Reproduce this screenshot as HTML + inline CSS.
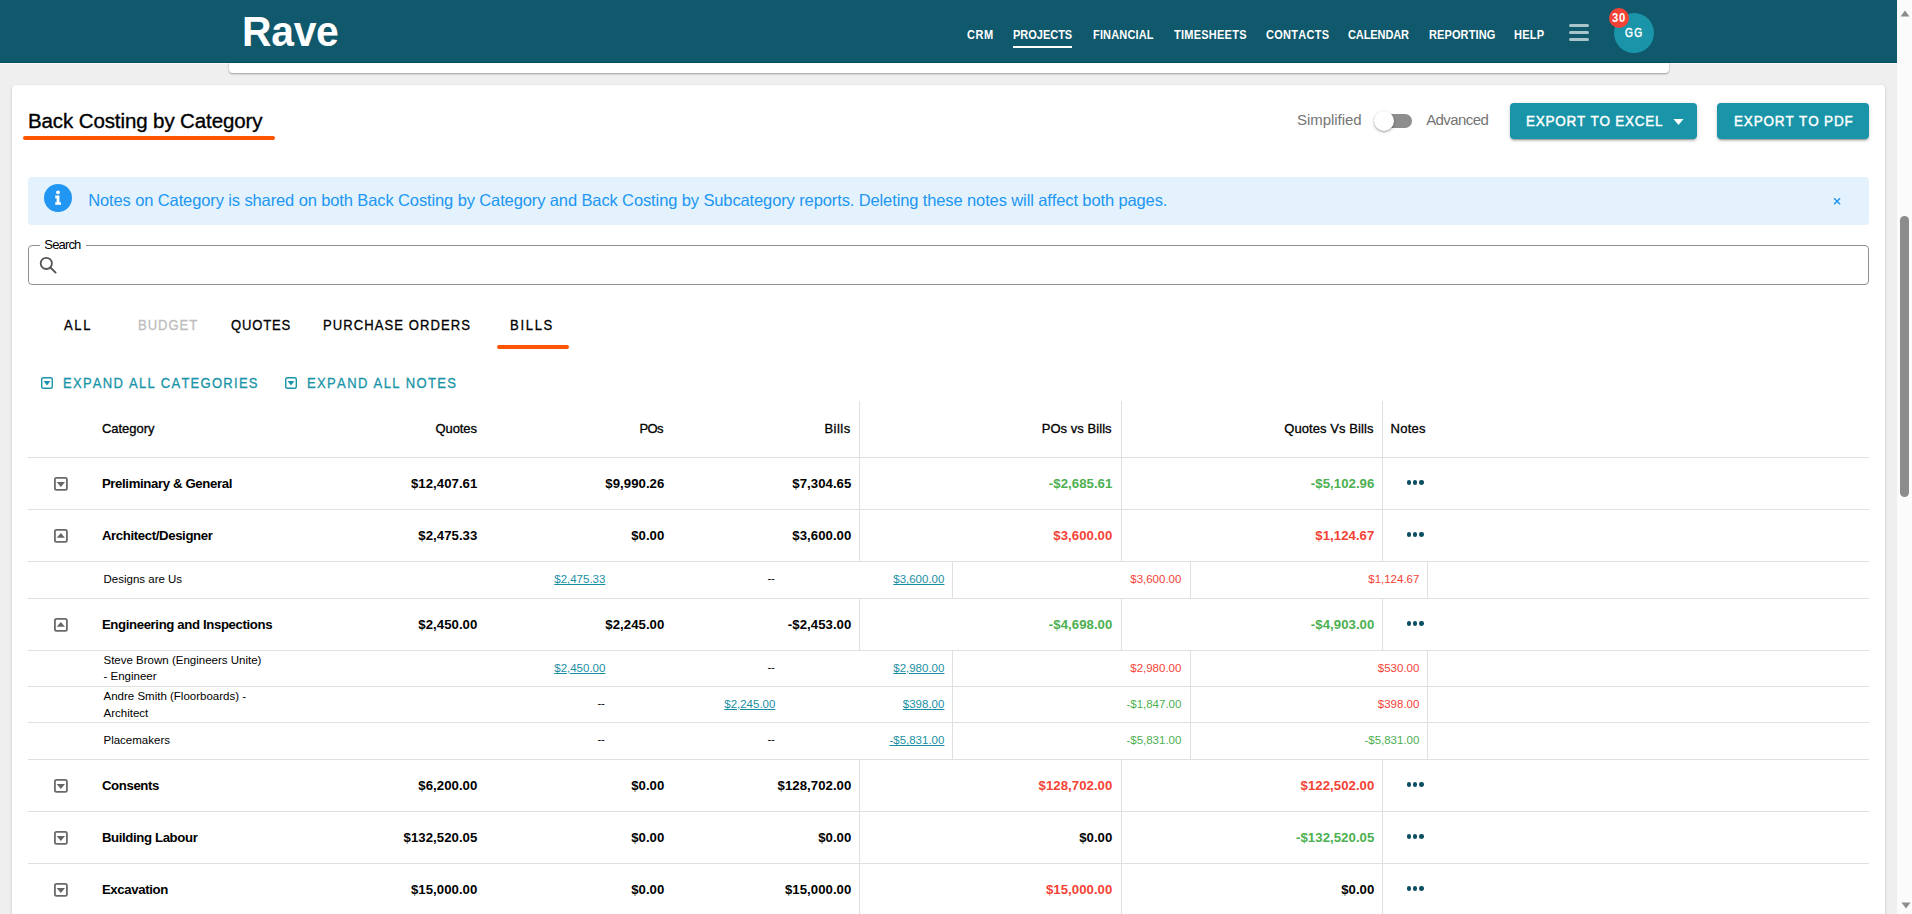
<!DOCTYPE html>
<html><head><meta charset="utf-8"><title>Back Costing by Category</title>
<style>
html,body{margin:0;padding:0;width:1912px;height:914px;overflow:hidden;background:#efefef;}
body{position:relative;font-family:"Liberation Sans",sans-serif;font-kerning:none;}
body>div{position:absolute;box-sizing:border-box;}
.t{white-space:nowrap;}
</style></head><body>
<div style="left:0px;top:63px;width:1897px;height:1px;background:#faf8f8;"></div>
<div style="left:229px;top:56px;width:1440px;height:17px;background:#fff;border-radius:0 0 4px 4px;box-shadow:0 1px 2px rgba(0,0,0,0.35);"></div>
<div style="left:0px;top:0px;width:1897px;height:63px;background:#10596c;"></div>
<div style="left:0px;top:62px;width:1897px;height:1px;background:#054d61;"></div>
<div class="t" style="left:242.10px;top:9.90px;font-size:43.0px;line-height:43.0px;font-weight:700;color:#fff;letter-spacing:-0.312px;transform:scaleX(0.95);transform-origin:0 0;">Rave</div>
<div class="t" style="left:967.00px;top:28.72px;font-size:12.5px;line-height:12.5px;font-weight:700;color:#fff;letter-spacing:0.575px;transform:scaleX(0.88);transform-origin:0 0;">CRM</div>
<div class="t" style="left:1013.20px;top:28.72px;font-size:12.5px;line-height:12.5px;font-weight:700;color:#fff;letter-spacing:-0.015px;transform:scaleX(0.88);transform-origin:0 0;">PROJECTS</div>
<div class="t" style="left:1092.50px;top:28.72px;font-size:12.5px;line-height:12.5px;font-weight:700;color:#fff;letter-spacing:0.186px;transform:scaleX(0.88);transform-origin:0 0;">FINANCIAL</div>
<div class="t" style="left:1173.80px;top:28.72px;font-size:12.5px;line-height:12.5px;font-weight:700;color:#fff;letter-spacing:0.279px;transform:scaleX(0.88);transform-origin:0 0;">TIMESHEETS</div>
<div class="t" style="left:1266.00px;top:28.72px;font-size:12.5px;line-height:12.5px;font-weight:700;color:#fff;letter-spacing:0.309px;transform:scaleX(0.88);transform-origin:0 0;">CONTACTS</div>
<div class="t" style="left:1347.70px;top:28.72px;font-size:12.5px;line-height:12.5px;font-weight:700;color:#fff;letter-spacing:-0.113px;transform:scaleX(0.88);transform-origin:0 0;">CALENDAR</div>
<div class="t" style="left:1428.70px;top:28.72px;font-size:12.5px;line-height:12.5px;font-weight:700;color:#fff;letter-spacing:0.120px;transform:scaleX(0.88);transform-origin:0 0;">REPORTING</div>
<div class="t" style="left:1513.90px;top:28.72px;font-size:12.5px;line-height:12.5px;font-weight:700;color:#fff;letter-spacing:0.326px;transform:scaleX(0.88);transform-origin:0 0;">HELP</div>
<div style="left:1013px;top:46px;width:59px;height:2px;background:#fff;"></div>
<div style="left:1568.5px;top:24px;width:20.200000000000045px;height:3px;background:#a9c4cb;border-radius:2px;"></div>
<div style="left:1568.5px;top:31px;width:20.200000000000045px;height:3px;background:#a9c4cb;border-radius:2px;"></div>
<div style="left:1568.5px;top:38px;width:20.200000000000045px;height:3px;background:#a9c4cb;border-radius:2px;"></div>
<div style="left:1614px;top:13px;width:40px;height:40px;background:#1994a8;border-radius:50%;"></div>
<div class="t" style="left:1625.20px;top:26.54px;font-size:12.0px;line-height:12.0px;font-weight:400;color:#fff;letter-spacing:1.548px;-webkit-text-stroke:0.5px #fff;transform:scaleX(0.85);transform-origin:0 0;">GG</div>
<div style="left:1609px;top:8px;width:20px;height:20px;background:#f44336;border-radius:50%;"></div>
<div class="t" style="left:1611.70px;top:11.72px;font-size:12.5px;line-height:12.5px;font-weight:700;color:#fff;letter-spacing:0.826px;transform:scaleX(0.9);transform-origin:0 0;">30</div>
<div style="left:12px;top:85px;width:1873px;height:845px;background:#fff;border-radius:4px;box-shadow:0 1px 3px rgba(0,0,0,0.2);"></div>
<div class="t" style="left:28.00px;top:110.85px;font-size:20.5px;line-height:20.5px;font-weight:400;color:#000;letter-spacing:-0.107px;-webkit-text-stroke:0.35px #000;">Back Costing by Category</div>
<div style="left:23px;top:136px;width:252px;height:4px;background:#ff5500;border-radius:2px;"></div>
<div class="t" style="left:1297.00px;top:112.20px;font-size:15.0px;line-height:15.0px;font-weight:400;color:#757575;letter-spacing:-0.042px;">Simplified</div>
<div class="t" style="left:1426.20px;top:112.20px;font-size:15.0px;line-height:15.0px;font-weight:400;color:#757575;letter-spacing:-0.596px;">Advanced</div>
<div style="left:1378px;top:114px;width:34px;height:14px;background:#8e8e8e;border-radius:7px;"></div>
<div style="left:1374px;top:111px;width:20px;height:20px;background:#fff;border-radius:50%;box-shadow:0 1px 3px rgba(0,0,0,0.3),0 1px 1px rgba(0,0,0,0.14);"></div>
<div style="left:1510px;top:103px;width:187px;height:36px;background:#1994a8;border-radius:4px;box-shadow:0 3px 1px -2px rgba(0,0,0,0.2),0 2px 2px 0 rgba(0,0,0,0.14),0 1px 5px 0 rgba(0,0,0,0.12);"></div>
<div class="t" style="left:1526.30px;top:113.10px;font-size:15.0px;line-height:15.0px;font-weight:400;color:#fff;letter-spacing:0.831px;-webkit-text-stroke:0.45px #fff;transform:scaleX(0.9);transform-origin:0 0;">EXPORT TO EXCEL</div>
<svg style="position:absolute;left:1673px;top:119px" width="11" height="6"><path d="M0.5 0 L10.5 0 L5.5 6 Z" fill="#fff"/></svg>
<div style="left:1717px;top:103px;width:152px;height:36px;background:#1994a8;border-radius:4px;box-shadow:0 3px 1px -2px rgba(0,0,0,0.2),0 2px 2px 0 rgba(0,0,0,0.14),0 1px 5px 0 rgba(0,0,0,0.12);"></div>
<div class="t" style="left:1734.20px;top:113.10px;font-size:15.0px;line-height:15.0px;font-weight:400;color:#fff;letter-spacing:0.924px;-webkit-text-stroke:0.45px #fff;transform:scaleX(0.9);transform-origin:0 0;">EXPORT TO PDF</div>
<div style="left:28px;top:177px;width:1841px;height:48px;background:#e3f2fd;border-radius:4px;"></div>
<svg style="position:absolute;left:44px;top:184px" width="28" height="28" viewBox="0 0 28 28"><circle cx="14" cy="14" r="14" fill="#2196f3"/><circle cx="14" cy="8.3" r="1.9" fill="#fff"/><path d="M11.2 11.6h4.2v6.6h1.6v2.6h-5.8v-2.6h1.4v-4h-1.4z" fill="#fff"/></svg>
<div class="t" style="left:88.20px;top:191.83px;font-size:16.5px;line-height:16.5px;font-weight:400;color:#2196f3;letter-spacing:-0.116px;">Notes on Category is shared on both Back Costing by Category and Back Costing by Subcategory reports. Deleting these notes will affect both pages.</div>
<svg style="position:absolute;left:1833px;top:197px" width="9" height="9"><path d="M1.1 1.2L7.1 7.2M7.1 1.2L1.1 7.2" stroke="#2196f3" stroke-width="1.5"/></svg>
<div style="left:28px;top:245px;width:1841px;height:40px;border:1px solid #8f8f8f;border-radius:4px;"></div>
<div style="left:40px;top:240px;width:46px;height:10px;background:#fff;"></div>
<div class="t" style="left:44.30px;top:238.00px;font-size:13.0px;line-height:13.0px;font-weight:400;color:#000;letter-spacing:-0.832px;">Search</div>
<svg style="position:absolute;left:38px;top:255px" width="20" height="20"><circle cx="8.3" cy="8.4" r="5.6" stroke="#555" stroke-width="1.8" fill="none"/><path d="M12.4 12.5L17.6 17.6" stroke="#555" stroke-width="1.9" stroke-linecap="round"/></svg>
<div class="t" style="left:63.50px;top:317.53px;font-size:14.5px;line-height:14.5px;font-weight:400;color:#000;letter-spacing:1.799px;-webkit-text-stroke:0.3px #000;transform:scaleX(0.9);transform-origin:0 0;">ALL</div>
<div class="t" style="left:137.60px;top:317.53px;font-size:14.5px;line-height:14.5px;font-weight:400;color:#bdbdbd;letter-spacing:1.065px;-webkit-text-stroke:0.3px #bdbdbd;transform:scaleX(0.9);transform-origin:0 0;">BUDGET</div>
<div class="t" style="left:231.10px;top:317.53px;font-size:14.5px;line-height:14.5px;font-weight:400;color:#000;letter-spacing:0.933px;-webkit-text-stroke:0.3px #000;transform:scaleX(0.9);transform-origin:0 0;">QUOTES</div>
<div class="t" style="left:322.90px;top:317.53px;font-size:14.5px;line-height:14.5px;font-weight:400;color:#000;letter-spacing:1.193px;-webkit-text-stroke:0.3px #000;transform:scaleX(0.9);transform-origin:0 0;">PURCHASE ORDERS</div>
<div class="t" style="left:509.60px;top:317.53px;font-size:14.5px;line-height:14.5px;font-weight:400;color:#000;letter-spacing:1.876px;-webkit-text-stroke:0.3px #000;transform:scaleX(0.9);transform-origin:0 0;">BILLS</div>
<div style="left:497px;top:345px;width:72px;height:4px;background:#ff5500;border-radius:2px;"></div>
<svg style="position:absolute;left:41px;top:377px" width="12" height="12" viewBox="0 0 12 12"><rect x="0.7" y="0.7" width="10.6" height="10.6" rx="1.6" fill="none" stroke="#1994a8" stroke-width="1.4"/><path d="M2.6 4.1H9.4L6 8.5Z" fill="#1994a8"/></svg>
<div class="t" style="left:63.10px;top:375.93px;font-size:14.5px;line-height:14.5px;font-weight:400;color:#1994a8;letter-spacing:1.380px;-webkit-text-stroke:0.3px #1994a8;transform:scaleX(0.9);transform-origin:0 0;">EXPAND ALL CATEGORIES</div>
<svg style="position:absolute;left:285px;top:377px" width="12" height="12" viewBox="0 0 12 12"><rect x="0.7" y="0.7" width="10.6" height="10.6" rx="1.6" fill="none" stroke="#1994a8" stroke-width="1.4"/><path d="M2.6 4.1H9.4L6 8.5Z" fill="#1994a8"/></svg>
<div class="t" style="left:307.10px;top:375.93px;font-size:14.5px;line-height:14.5px;font-weight:400;color:#1994a8;letter-spacing:1.480px;-webkit-text-stroke:0.3px #1994a8;transform:scaleX(0.9);transform-origin:0 0;">EXPAND ALL NOTES</div>
<div class="t" style="left:101.90px;top:422.10px;font-size:13.0px;line-height:13.0px;font-weight:400;color:#000;letter-spacing:-0.021px;-webkit-text-stroke:0.3px #000;">Category</div>
<div class="t" style="left:435.60px;top:422.10px;font-size:13.0px;line-height:13.0px;font-weight:400;color:#000;letter-spacing:-0.123px;-webkit-text-stroke:0.3px #000;">Quotes</div>
<div class="t" style="left:639.60px;top:422.10px;font-size:13.0px;line-height:13.0px;font-weight:400;color:#000;letter-spacing:-0.641px;-webkit-text-stroke:0.3px #000;">POs</div>
<div class="t" style="left:824.40px;top:422.10px;font-size:13.0px;line-height:13.0px;font-weight:400;color:#000;letter-spacing:0.491px;-webkit-text-stroke:0.3px #000;">Bills</div>
<div class="t" style="left:1041.70px;top:422.10px;font-size:13.0px;line-height:13.0px;font-weight:400;color:#000;letter-spacing:0.051px;-webkit-text-stroke:0.3px #000;">POs vs Bills</div>
<div class="t" style="left:1284.20px;top:422.10px;font-size:13.0px;line-height:13.0px;font-weight:400;color:#000;letter-spacing:0.083px;-webkit-text-stroke:0.3px #000;">Quotes Vs Bills</div>
<div class="t" style="left:1390.60px;top:422.10px;font-size:13.0px;line-height:13.0px;font-weight:400;color:#000;letter-spacing:0.235px;-webkit-text-stroke:0.3px #000;">Notes</div>
<div style="left:28px;top:457px;width:1841px;height:1px;background:#e0e0e0;"></div>
<div style="left:28px;top:509px;width:1841px;height:1px;background:#e0e0e0;"></div>
<div style="left:859px;top:457px;width:1px;height:52px;background:#e0e0e0;"></div>
<div style="left:1121px;top:457px;width:1px;height:52px;background:#e0e0e0;"></div>
<div style="left:1382px;top:457px;width:1px;height:52px;background:#e0e0e0;"></div>
<svg style="position:absolute;left:54px;top:477px" width="14" height="14" viewBox="0 0 14 14"><rect x="0.9" y="0.9" width="12" height="12" rx="1.6" fill="none" stroke="#6a6a6a" stroke-width="1.8"/><path d="M2.7 5.1H11L6.85 9.9Z" fill="#666"/></svg>
<div class="t" style="left:101.90px;top:477.03px;font-size:13.2px;line-height:13.2px;font-weight:700;color:#000;letter-spacing:-0.370px;">Preliminary &amp; General</div>
<div class="t" style="left:410.88px;top:477.03px;font-size:13.2px;line-height:13.2px;font-weight:700;color:#000;letter-spacing:0.050px;">$12,407.61</div>
<div class="t" style="left:605.27px;top:477.03px;font-size:13.2px;line-height:13.2px;font-weight:700;color:#000;letter-spacing:0.050px;">$9,990.26</div>
<div class="t" style="left:792.27px;top:477.03px;font-size:13.2px;line-height:13.2px;font-weight:700;color:#000;letter-spacing:0.050px;">$7,304.65</div>
<div class="t" style="left:1048.83px;top:477.03px;font-size:13.2px;line-height:13.2px;font-weight:700;color:#4caf50;letter-spacing:0.050px;">-$2,685.61</div>
<div class="t" style="left:1310.83px;top:477.03px;font-size:13.2px;line-height:13.2px;font-weight:700;color:#4caf50;letter-spacing:0.050px;">-$5,102.96</div>
<div style="left:1406.9499999999998px;top:480.3px;width:4.300000000000182px;height:4.300000000000011px;background:#0d4f62;border-radius:50%;"></div>
<div style="left:1413.1499999999999px;top:480.3px;width:4.300000000000182px;height:4.300000000000011px;background:#0d4f62;border-radius:50%;"></div>
<div style="left:1419.4499999999998px;top:480.3px;width:4.300000000000182px;height:4.300000000000011px;background:#0d4f62;border-radius:50%;"></div>
<div style="left:28px;top:561px;width:1841px;height:1px;background:#e0e0e0;"></div>
<div style="left:859px;top:509px;width:1px;height:52px;background:#e0e0e0;"></div>
<div style="left:1121px;top:509px;width:1px;height:52px;background:#e0e0e0;"></div>
<div style="left:1382px;top:509px;width:1px;height:52px;background:#e0e0e0;"></div>
<svg style="position:absolute;left:54px;top:529px" width="14" height="14" viewBox="0 0 14 14"><rect x="0.9" y="0.9" width="12" height="12" rx="1.6" fill="none" stroke="#6a6a6a" stroke-width="1.8"/><path d="M2.7 8.8H11L6.85 4Z" fill="#666"/></svg>
<div class="t" style="left:101.90px;top:529.03px;font-size:13.2px;line-height:13.2px;font-weight:700;color:#000;letter-spacing:-0.370px;">Architect/Designer</div>
<div class="t" style="left:418.27px;top:529.03px;font-size:13.2px;line-height:13.2px;font-weight:700;color:#000;letter-spacing:0.050px;">$2,475.33</div>
<div class="t" style="left:631.13px;top:529.03px;font-size:13.2px;line-height:13.2px;font-weight:700;color:#000;letter-spacing:0.050px;">$0.00</div>
<div class="t" style="left:792.27px;top:529.03px;font-size:13.2px;line-height:13.2px;font-weight:700;color:#000;letter-spacing:0.050px;">$3,600.00</div>
<div class="t" style="left:1053.27px;top:529.03px;font-size:13.2px;line-height:13.2px;font-weight:700;color:#f44336;letter-spacing:0.050px;">$3,600.00</div>
<div class="t" style="left:1315.27px;top:529.03px;font-size:13.2px;line-height:13.2px;font-weight:700;color:#f44336;letter-spacing:0.050px;">$1,124.67</div>
<div style="left:1406.9499999999998px;top:532.3px;width:4.300000000000182px;height:4.300000000000068px;background:#0d4f62;border-radius:50%;"></div>
<div style="left:1413.1499999999999px;top:532.3px;width:4.300000000000182px;height:4.300000000000068px;background:#0d4f62;border-radius:50%;"></div>
<div style="left:1419.4499999999998px;top:532.3px;width:4.300000000000182px;height:4.300000000000068px;background:#0d4f62;border-radius:50%;"></div>
<div style="left:28px;top:650px;width:1841px;height:1px;background:#e0e0e0;"></div>
<div style="left:859px;top:598px;width:1px;height:52px;background:#e0e0e0;"></div>
<div style="left:1121px;top:598px;width:1px;height:52px;background:#e0e0e0;"></div>
<div style="left:1382px;top:598px;width:1px;height:52px;background:#e0e0e0;"></div>
<svg style="position:absolute;left:54px;top:618px" width="14" height="14" viewBox="0 0 14 14"><rect x="0.9" y="0.9" width="12" height="12" rx="1.6" fill="none" stroke="#6a6a6a" stroke-width="1.8"/><path d="M2.7 8.8H11L6.85 4Z" fill="#666"/></svg>
<div class="t" style="left:101.90px;top:618.03px;font-size:13.2px;line-height:13.2px;font-weight:700;color:#000;letter-spacing:-0.370px;">Engineering and Inspections</div>
<div class="t" style="left:418.27px;top:618.03px;font-size:13.2px;line-height:13.2px;font-weight:700;color:#000;letter-spacing:0.050px;">$2,450.00</div>
<div class="t" style="left:605.27px;top:618.03px;font-size:13.2px;line-height:13.2px;font-weight:700;color:#000;letter-spacing:0.050px;">$2,245.00</div>
<div class="t" style="left:787.83px;top:618.03px;font-size:13.2px;line-height:13.2px;font-weight:700;color:#000;letter-spacing:0.050px;">-$2,453.00</div>
<div class="t" style="left:1048.83px;top:618.03px;font-size:13.2px;line-height:13.2px;font-weight:700;color:#4caf50;letter-spacing:0.050px;">-$4,698.00</div>
<div class="t" style="left:1310.83px;top:618.03px;font-size:13.2px;line-height:13.2px;font-weight:700;color:#4caf50;letter-spacing:0.050px;">-$4,903.00</div>
<div style="left:1406.9499999999998px;top:621.3px;width:4.300000000000182px;height:4.300000000000068px;background:#0d4f62;border-radius:50%;"></div>
<div style="left:1413.1499999999999px;top:621.3px;width:4.300000000000182px;height:4.300000000000068px;background:#0d4f62;border-radius:50%;"></div>
<div style="left:1419.4499999999998px;top:621.3px;width:4.300000000000182px;height:4.300000000000068px;background:#0d4f62;border-radius:50%;"></div>
<div style="left:28px;top:811px;width:1841px;height:1px;background:#e0e0e0;"></div>
<div style="left:859px;top:759px;width:1px;height:52px;background:#e0e0e0;"></div>
<div style="left:1121px;top:759px;width:1px;height:52px;background:#e0e0e0;"></div>
<div style="left:1382px;top:759px;width:1px;height:52px;background:#e0e0e0;"></div>
<svg style="position:absolute;left:54px;top:779px" width="14" height="14" viewBox="0 0 14 14"><rect x="0.9" y="0.9" width="12" height="12" rx="1.6" fill="none" stroke="#6a6a6a" stroke-width="1.8"/><path d="M2.7 5.1H11L6.85 9.9Z" fill="#666"/></svg>
<div class="t" style="left:101.90px;top:779.03px;font-size:13.2px;line-height:13.2px;font-weight:700;color:#000;letter-spacing:-0.370px;">Consents</div>
<div class="t" style="left:418.27px;top:779.03px;font-size:13.2px;line-height:13.2px;font-weight:700;color:#000;letter-spacing:0.050px;">$6,200.00</div>
<div class="t" style="left:631.13px;top:779.03px;font-size:13.2px;line-height:13.2px;font-weight:700;color:#000;letter-spacing:0.050px;">$0.00</div>
<div class="t" style="left:777.50px;top:779.03px;font-size:13.2px;line-height:13.2px;font-weight:700;color:#000;letter-spacing:0.050px;">$128,702.00</div>
<div class="t" style="left:1038.50px;top:779.03px;font-size:13.2px;line-height:13.2px;font-weight:700;color:#f44336;letter-spacing:0.050px;">$128,702.00</div>
<div class="t" style="left:1300.50px;top:779.03px;font-size:13.2px;line-height:13.2px;font-weight:700;color:#f44336;letter-spacing:0.050px;">$122,502.00</div>
<div style="left:1406.9499999999998px;top:782.3px;width:4.300000000000182px;height:4.300000000000068px;background:#0d4f62;border-radius:50%;"></div>
<div style="left:1413.1499999999999px;top:782.3px;width:4.300000000000182px;height:4.300000000000068px;background:#0d4f62;border-radius:50%;"></div>
<div style="left:1419.4499999999998px;top:782.3px;width:4.300000000000182px;height:4.300000000000068px;background:#0d4f62;border-radius:50%;"></div>
<div style="left:28px;top:863px;width:1841px;height:1px;background:#e0e0e0;"></div>
<div style="left:859px;top:811px;width:1px;height:52px;background:#e0e0e0;"></div>
<div style="left:1121px;top:811px;width:1px;height:52px;background:#e0e0e0;"></div>
<div style="left:1382px;top:811px;width:1px;height:52px;background:#e0e0e0;"></div>
<svg style="position:absolute;left:54px;top:831px" width="14" height="14" viewBox="0 0 14 14"><rect x="0.9" y="0.9" width="12" height="12" rx="1.6" fill="none" stroke="#6a6a6a" stroke-width="1.8"/><path d="M2.7 5.1H11L6.85 9.9Z" fill="#666"/></svg>
<div class="t" style="left:101.90px;top:831.03px;font-size:13.2px;line-height:13.2px;font-weight:700;color:#000;letter-spacing:-0.370px;">Building Labour</div>
<div class="t" style="left:403.50px;top:831.03px;font-size:13.2px;line-height:13.2px;font-weight:700;color:#000;letter-spacing:0.050px;">$132,520.05</div>
<div class="t" style="left:631.13px;top:831.03px;font-size:13.2px;line-height:13.2px;font-weight:700;color:#000;letter-spacing:0.050px;">$0.00</div>
<div class="t" style="left:818.13px;top:831.03px;font-size:13.2px;line-height:13.2px;font-weight:700;color:#000;letter-spacing:0.050px;">$0.00</div>
<div class="t" style="left:1079.13px;top:831.03px;font-size:13.2px;line-height:13.2px;font-weight:700;color:#000;letter-spacing:0.050px;">$0.00</div>
<div class="t" style="left:1296.06px;top:831.03px;font-size:13.2px;line-height:13.2px;font-weight:700;color:#4caf50;letter-spacing:0.050px;">-$132,520.05</div>
<div style="left:1406.9499999999998px;top:834.3px;width:4.300000000000182px;height:4.300000000000068px;background:#0d4f62;border-radius:50%;"></div>
<div style="left:1413.1499999999999px;top:834.3px;width:4.300000000000182px;height:4.300000000000068px;background:#0d4f62;border-radius:50%;"></div>
<div style="left:1419.4499999999998px;top:834.3px;width:4.300000000000182px;height:4.300000000000068px;background:#0d4f62;border-radius:50%;"></div>
<div style="left:28px;top:915px;width:1841px;height:1px;background:#e0e0e0;"></div>
<div style="left:859px;top:863px;width:1px;height:52px;background:#e0e0e0;"></div>
<div style="left:1121px;top:863px;width:1px;height:52px;background:#e0e0e0;"></div>
<div style="left:1382px;top:863px;width:1px;height:52px;background:#e0e0e0;"></div>
<svg style="position:absolute;left:54px;top:883px" width="14" height="14" viewBox="0 0 14 14"><rect x="0.9" y="0.9" width="12" height="12" rx="1.6" fill="none" stroke="#6a6a6a" stroke-width="1.8"/><path d="M2.7 5.1H11L6.85 9.9Z" fill="#666"/></svg>
<div class="t" style="left:101.90px;top:883.03px;font-size:13.2px;line-height:13.2px;font-weight:700;color:#000;letter-spacing:-0.370px;">Excavation</div>
<div class="t" style="left:410.88px;top:883.03px;font-size:13.2px;line-height:13.2px;font-weight:700;color:#000;letter-spacing:0.050px;">$15,000.00</div>
<div class="t" style="left:631.13px;top:883.03px;font-size:13.2px;line-height:13.2px;font-weight:700;color:#000;letter-spacing:0.050px;">$0.00</div>
<div class="t" style="left:784.88px;top:883.03px;font-size:13.2px;line-height:13.2px;font-weight:700;color:#000;letter-spacing:0.050px;">$15,000.00</div>
<div class="t" style="left:1045.88px;top:883.03px;font-size:13.2px;line-height:13.2px;font-weight:700;color:#f44336;letter-spacing:0.050px;">$15,000.00</div>
<div class="t" style="left:1341.13px;top:883.03px;font-size:13.2px;line-height:13.2px;font-weight:700;color:#000;letter-spacing:0.050px;">$0.00</div>
<div style="left:1406.9499999999998px;top:886.3px;width:4.300000000000182px;height:4.300000000000068px;background:#0d4f62;border-radius:50%;"></div>
<div style="left:1413.1499999999999px;top:886.3px;width:4.300000000000182px;height:4.300000000000068px;background:#0d4f62;border-radius:50%;"></div>
<div style="left:1419.4499999999998px;top:886.3px;width:4.300000000000182px;height:4.300000000000068px;background:#0d4f62;border-radius:50%;"></div>
<div style="left:859px;top:401px;width:1px;height:56px;background:#e0e0e0;"></div>
<div style="left:1121px;top:401px;width:1px;height:56px;background:#e0e0e0;"></div>
<div style="left:1382px;top:401px;width:1px;height:56px;background:#e0e0e0;"></div>
<div style="left:28px;top:598px;width:1841px;height:1px;background:#e0e0e0;"></div>
<div style="left:952px;top:561px;width:1px;height:37px;background:#e0e0e0;"></div>
<div style="left:1190px;top:561px;width:1px;height:37px;background:#e0e0e0;"></div>
<div style="left:1427px;top:561px;width:1px;height:37px;background:#e0e0e0;"></div>
<div class="t" style="left:103.50px;top:573.67px;font-size:11.5px;line-height:11.5px;font-weight:400;color:#000;letter-spacing:0.000px;">Designs are Us</div>
<div class="t" style="left:554.24px;top:574.07px;font-size:11.5px;line-height:11.5px;font-weight:400;color:#1a8fa3;letter-spacing:0.000px;text-decoration:underline;">$2,475.33</div>
<div class="t" style="left:767.47px;top:573.27px;font-size:11.5px;line-height:11.5px;font-weight:400;color:#000;letter-spacing:-0.300px;">--</div>
<div class="t" style="left:893.24px;top:574.07px;font-size:11.5px;line-height:11.5px;font-weight:400;color:#1a8fa3;letter-spacing:0.000px;text-decoration:underline;">$3,600.00</div>
<div class="t" style="left:1130.24px;top:574.07px;font-size:11.5px;line-height:11.5px;font-weight:400;color:#f44336;letter-spacing:0.000px;">$3,600.00</div>
<div class="t" style="left:1368.24px;top:574.07px;font-size:11.5px;line-height:11.5px;font-weight:400;color:#f44336;letter-spacing:0.000px;">$1,124.67</div>
<div style="left:28px;top:686px;width:1841px;height:1px;background:#e0e0e0;"></div>
<div style="left:952px;top:650px;width:1px;height:36px;background:#e0e0e0;"></div>
<div style="left:1190px;top:650px;width:1px;height:36px;background:#e0e0e0;"></div>
<div style="left:1427px;top:650px;width:1px;height:36px;background:#e0e0e0;"></div>
<div class="t" style="left:103.50px;top:654.67px;font-size:11.5px;line-height:11.5px;font-weight:400;color:#000;letter-spacing:0.000px;">Steve Brown (Engineers Unite)</div>
<div class="t" style="left:103.50px;top:670.67px;font-size:11.5px;line-height:11.5px;font-weight:400;color:#000;letter-spacing:0.000px;">- Engineer</div>
<div class="t" style="left:554.24px;top:662.57px;font-size:11.5px;line-height:11.5px;font-weight:400;color:#1a8fa3;letter-spacing:0.000px;text-decoration:underline;">$2,450.00</div>
<div class="t" style="left:767.47px;top:661.77px;font-size:11.5px;line-height:11.5px;font-weight:400;color:#000;letter-spacing:-0.300px;">--</div>
<div class="t" style="left:893.24px;top:662.57px;font-size:11.5px;line-height:11.5px;font-weight:400;color:#1a8fa3;letter-spacing:0.000px;text-decoration:underline;">$2,980.00</div>
<div class="t" style="left:1130.24px;top:662.57px;font-size:11.5px;line-height:11.5px;font-weight:400;color:#f44336;letter-spacing:0.000px;">$2,980.00</div>
<div class="t" style="left:1377.83px;top:662.57px;font-size:11.5px;line-height:11.5px;font-weight:400;color:#f44336;letter-spacing:0.000px;">$530.00</div>
<div style="left:28px;top:722px;width:1841px;height:1px;background:#e0e0e0;"></div>
<div style="left:952px;top:686px;width:1px;height:36px;background:#e0e0e0;"></div>
<div style="left:1190px;top:686px;width:1px;height:36px;background:#e0e0e0;"></div>
<div style="left:1427px;top:686px;width:1px;height:36px;background:#e0e0e0;"></div>
<div class="t" style="left:103.50px;top:691.27px;font-size:11.5px;line-height:11.5px;font-weight:400;color:#000;letter-spacing:0.000px;">Andre Smith (Floorboards) -</div>
<div class="t" style="left:103.50px;top:708.07px;font-size:11.5px;line-height:11.5px;font-weight:400;color:#000;letter-spacing:0.000px;">Architect</div>
<div class="t" style="left:597.47px;top:697.77px;font-size:11.5px;line-height:11.5px;font-weight:400;color:#000;letter-spacing:-0.300px;">--</div>
<div class="t" style="left:724.24px;top:698.57px;font-size:11.5px;line-height:11.5px;font-weight:400;color:#1a8fa3;letter-spacing:0.000px;text-decoration:underline;">$2,245.00</div>
<div class="t" style="left:902.83px;top:698.57px;font-size:11.5px;line-height:11.5px;font-weight:400;color:#1a8fa3;letter-spacing:0.000px;text-decoration:underline;">$398.00</div>
<div class="t" style="left:1126.41px;top:698.57px;font-size:11.5px;line-height:11.5px;font-weight:400;color:#4caf50;letter-spacing:0.000px;">-$1,847.00</div>
<div class="t" style="left:1377.83px;top:698.57px;font-size:11.5px;line-height:11.5px;font-weight:400;color:#f44336;letter-spacing:0.000px;">$398.00</div>
<div style="left:28px;top:759px;width:1841px;height:1px;background:#e0e0e0;"></div>
<div style="left:952px;top:722px;width:1px;height:37px;background:#e0e0e0;"></div>
<div style="left:1190px;top:722px;width:1px;height:37px;background:#e0e0e0;"></div>
<div style="left:1427px;top:722px;width:1px;height:37px;background:#e0e0e0;"></div>
<div class="t" style="left:103.50px;top:735.37px;font-size:11.5px;line-height:11.5px;font-weight:400;color:#000;letter-spacing:0.000px;">Placemakers</div>
<div class="t" style="left:597.47px;top:734.27px;font-size:11.5px;line-height:11.5px;font-weight:400;color:#000;letter-spacing:-0.300px;">--</div>
<div class="t" style="left:767.47px;top:734.27px;font-size:11.5px;line-height:11.5px;font-weight:400;color:#000;letter-spacing:-0.300px;">--</div>
<div class="t" style="left:889.41px;top:735.07px;font-size:11.5px;line-height:11.5px;font-weight:400;color:#1a8fa3;letter-spacing:0.000px;text-decoration:underline;">-$5,831.00</div>
<div class="t" style="left:1126.41px;top:735.07px;font-size:11.5px;line-height:11.5px;font-weight:400;color:#4caf50;letter-spacing:0.000px;">-$5,831.00</div>
<div class="t" style="left:1364.41px;top:735.07px;font-size:11.5px;line-height:11.5px;font-weight:400;color:#4caf50;letter-spacing:0.000px;">-$5,831.00</div>
<div style="left:1897px;top:0px;width:15px;height:914px;background:#fbfbfb;"></div>
<div style="left:1900px;top:215.7px;width:9px;height:281.1px;background:#8c8c8c;border-radius:5px;"></div>
<svg style="position:absolute;left:1900px;top:10px" width="10" height="7"><path d="M0.5 6.5L9.5 6.5L5 0.5Z" fill="#8c8c8c"/></svg>
<svg style="position:absolute;left:1901px;top:902px" width="10" height="7"><path d="M0.5 0.5L9.5 0.5L5 6.5Z" fill="#8c8c8c"/></svg>
</body></html>
